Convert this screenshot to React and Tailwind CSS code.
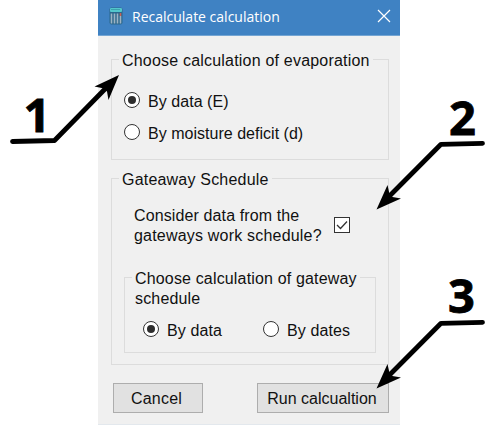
function Radio({ checked, children, className = '', textClass = '' }) {
  return (
    <label className={`flex items-center gap-2 leading-4 ${className}`}>
      <span className="flex size-4 shrink-0 items-center justify-center rounded-full border border-[#333] bg-white">
        {checked && <span className="size-2 rounded-full bg-[#2d2d2d]" />}
      </span>
      <span className={`mt-[3px] whitespace-nowrap leading-[15px] ${textClass}`}>{children}</span>
    </label>
  );
}

function Group({ title, className = '', titleClass = '', children }) {
  return (
    <section className={`border border-[#dcdcdc] ${className}`}>
      <h2 className={`-mt-[9px] w-fit whitespace-nowrap bg-[#f0f0f0] ${titleClass}`}>{title}</h2>
      {children}
    </section>
  );
}

function CalculatorIcon() {
  return (
    <svg width="14" height="18" viewBox="0 0 14 18">
      <rect x="0.5" y="0.5" width="13" height="17" rx="2" fill="#2b678c" />
      <rect x="1" y="1" width="12" height="4" rx="1" fill="#53c7cc" />
      <path d="M2 2.5h9" stroke="#3ba3ae" />
      <path d="M2.5 6.500v10M5.5 6.500v10M8.5 6.500v10M11.5 9v7.500" stroke="#9cb3c3" strokeWidth="1.6" />
      <path d="M11.5 6v3" stroke="#c76055" strokeWidth="1.6" />
    </svg>
  );
}

function Callouts() {
  return (
    <svg className="pointer-events-none absolute left-0 top-0" width="498" height="425" viewBox="0 0 498 425">
      <g fill="none" stroke="#000" strokeWidth="4.8" strokeLinecap="round" strokeLinejoin="round">
        <path d="M12.500 141.500L54.500 140.500L106 88" />
        <path d="M482.500 143.300L441 144.300L389 196.500" />
        <path d="M482.500 322.300L441 323.300L389 375.500" />
      </g>
      <path d="M119 75L94.500 86.500L104 88.500L107 91.500L108.500 100Z" />
      <path d="M376.500 209.500L387.500 185L389.500 194L392.500 197L401 198.500Z" />
      <path d="M376.500 388.500L387.500 364L389.500 373L392.500 376L401 377.500Z" />
      <g className="font-['Open_Sans','Noto_Sans',sans-serif] text-[47px] font-bold tracking-normal" stroke="#000" strokeWidth="0.8">
        <text x="23.500" y="131.700">1</text>
        <text x="449" y="134.700">2</text>
        <text x="448" y="312.500">3</text>
      </g>
    </svg>
  );
}

export default function App() {
  return (
    <main className="relative flex h-[425px] w-[498px] justify-start overflow-hidden bg-white pl-[98px] font-['Liberation_Sans',Arial,sans-serif] text-[16px] tracking-[0.2px] text-[#111]">
      <div className="flex h-[425px] w-[302px] flex-col border-b border-[#e3e8ed] bg-[#f0f0f0]">
        <header className="flex h-9 shrink-0 items-center border-b border-[#74a5d3] bg-[#3f82c3] pb-[3px] pl-[11px] pr-[9px] text-white">
          <CalculatorIcon />
          <h1 className="ml-[9px] mt-[2px] whitespace-nowrap font-['Open_Sans','Noto_Sans',sans-serif] text-[14px] leading-5 tracking-normal">Recalculate calculation</h1>
          <svg className="ml-auto" width="14" height="14" viewBox="0 0 14 14">
            <path d="M1 1L13 13M13 1L1 13" stroke="white" strokeWidth="1.2" />
          </svg>
        </header>

        <div className="flex flex-col pl-[13px] pr-[11px] pt-[23px]">
          <Group title="Choose calculation of evaporation" className="h-[101px]" titleClass="ml-[7px] px-[3px] leading-[19px]">
            <div className="mt-[21px] flex flex-col gap-[14px] pl-3">
              <Radio checked textClass="tracking-[0.05px]">By data (E)</Radio>
              <Radio textClass="tracking-[0.02px]">By moisture deficit (d)</Radio>
            </div>
          </Group>

          <Group title="Gateaway Schedule" className="mt-[18px] h-[187px]" titleClass="ml-[7px] px-[3px] leading-[19px]">
            <div className="mt-[17px] flex pl-[22px]">
              <p className="w-[200px] whitespace-nowrap leading-5"><span className="tracking-[0.12px]">Consider data from the</span><br />gateways work schedule?</p>
              <span className="mt-[11px] flex size-4 items-center justify-center border border-[#333] bg-white">
                <svg width="14" height="14" viewBox="0 0 14 14"><path d="M2 7L5.500 10.500L12 3.500" fill="none" stroke="#333" strokeWidth="1.3" /></svg>
              </span>
            </div>
            <Group title={<>Choose calculation of gateway<br />schedule</>} className="ml-3 mr-3 mt-[31px] h-[76px]" titleClass="ml-[7px] px-[3px] leading-5 tracking-[0.16px]">
              <div className="flex gap-[41px] pl-[18px] pt-[11px]">
                <Radio checked textClass="tracking-[0.1px]">By data</Radio>
                <Radio textClass="tracking-[0.1px]">By dates</Radio>
              </div>
            </Group>
          </Group>

          <div className="mt-[18px] flex justify-between pl-[2px]">
            <button className="h-[30px] w-[90px] border border-[#adadad] bg-[#e1e1e1] pr-[3px] pt-px tracking-[0.2px]">Cancel</button>
            <button className="h-[30px] w-[132px] whitespace-nowrap border border-[#adadad] bg-[#e1e1e1] pr-[2px] pt-px tracking-normal">Run calcualtion</button>
          </div>
        </div>
      </div>
      <Callouts />
    </main>
  );
}
